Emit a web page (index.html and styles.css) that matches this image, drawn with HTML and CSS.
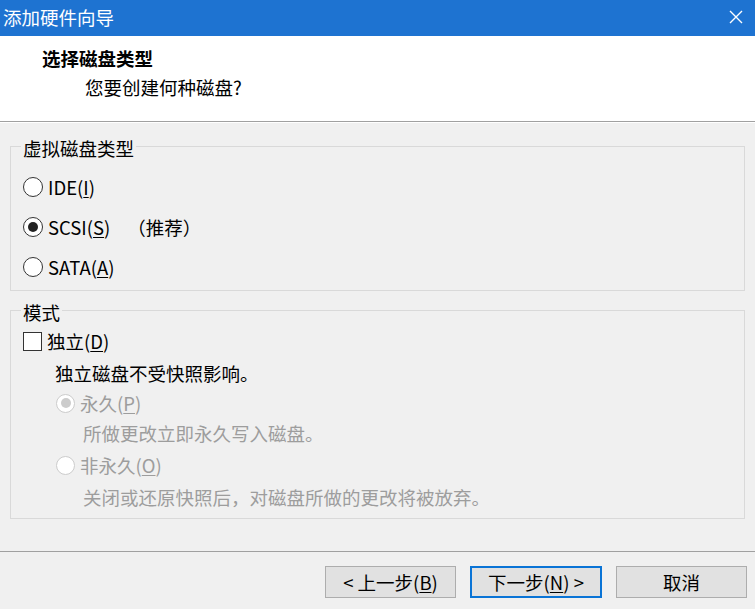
FILE: index.html
```html
<!DOCTYPE html>
<html lang="zh-CN">
<head>
<meta charset="utf-8">
<title>添加硬件向导</title>
<link rel="stylesheet" href="styles.css">
</head>
<body>
<div class="window">
  <div class="titlebar">
    <span class="title">添加硬件向导</span>
    <svg class="close" width="14" height="14" viewBox="0 0 14 14"><path d="M1 1L13 13M13 1L1 13" stroke="#fff" stroke-width="1.4" fill="none"/></svg>
  </div>
  <div class="header">
    <div class="h-title">选择磁盘类型</div>
    <div class="h-sub">您要创建何种磁盘?</div>
  </div>
  <div class="content">
    <div class="group g1">
      <div class="group-title">虚拟磁盘类型</div>
      <div class="radio-list">
        <div class="row"><span class="radio"></span><span class="lbl">IDE(<u>I</u>)</span></div>
        <div class="row"><span class="radio checked"></span><span class="lbl">SCSI(<u>S</u>)</span><span class="note">（推荐）</span></div>
        <div class="row"><span class="radio"></span><span class="lbl">SATA(<u>A</u>)</span></div>
      </div>
    </div>
    <div class="group g2">
      <div class="group-title">模式</div>
      <div class="line chk-row"><span class="checkbox"></span><span class="lbl">独立(<u>D</u>)</span></div>
      <div class="line desc">独立磁盘不受快照影响。</div>
      <div class="line sub-row"><span class="radio disabled checked"></span><span class="lbl dim">永久(<u>P</u>)</span></div>
      <div class="line sub-desc dim">所做更改立即永久写入磁盘。</div>
      <div class="line sub-row r2"><span class="radio disabled"></span><span class="lbl dim">非永久(<u>O</u>)</span></div>
      <div class="line sub-desc d3 dim">关闭或还原快照后，对磁盘所做的更改将被放弃。</div>
    </div>
  </div>
  <div class="footer">
    <button class="btn">&lt; 上一步(<u>B</u>)</button>
    <button class="btn primary">下一步(<u>N</u>) &gt;</button>
    <button class="btn">取消</button>
  </div>
</div>
</body>
</html>
```
FILE: styles.css
```css
* { box-sizing: border-box; }
html, body { margin: 0; padding: 0; }
body {
  font-family: "Noto Sans CJK SC", "Noto Sans", sans-serif;
  font-size: 18.5px;
  line-height: 22px;
  color: #000;
  background: #f0f0f0;
}
.window {
  width: 755px;
  height: 609px;
  display: flex;
  flex-direction: column;
  background: #f0f0f0;
  overflow: hidden;
}
.titlebar {
  height: 36px;
  flex: none;
  background: #1e73d1;
  color: #fff;
  display: flex;
  align-items: center;
  justify-content: space-between;
  padding: 0 12px 0 3px;
}
.title { line-height: 32px; padding-bottom: 3px; }
.close { display: block; margin-bottom: 2px; }
.header {
  height: 86px;
  flex: none;
  background: #fff;
  border-bottom: 1px solid #a0a0a0;
  padding-top: 11px;
}
.h-title { font-weight: bold; padding-left: 42px; }
.h-sub { padding-left: 85px; margin-top: 7px; }
.content {
  flex: 1;
  border-top: 1px solid #fff;
  padding: 23px 10px 0 10px;
}
.group {
  border: 1px solid #d9d9d9;
  padding-left: 12px;
}
.g2 { margin-top: 19px; padding-bottom: 6px; }
.g1 { padding-bottom: 3px; }
.group-title {
  width: max-content;
  margin: -10px 0 0 -2px;
  padding: 0 2px;
  background: #f0f0f0;
}
.radio-list { margin-top: 8px; }
.row {
  height: 40px;
  display: flex;
  align-items: center;
}
.radio {
  width: 20px;
  height: 20px;
  flex: none;
  border: 1.5px solid #333;
  border-radius: 50%;
  background: #fff;
  display: flex;
  align-items: center;
  justify-content: center;
}
.radio.checked::after {
  content: "";
  width: 10px;
  height: 10px;
  border-radius: 50%;
  background: #222;
}
.radio.disabled { border-color: #cccccc; width: 19px; height: 19px; }
.radio.disabled.checked::after { background: #cccccc; }
.lbl { margin-left: 5px; }
.note { margin-left: 17px; }
u { text-underline-offset: 2px; text-decoration-thickness: 1px; }
.line {
  height: 30px;
  display: flex;
  align-items: center;
}
.chk-row { margin-top: 3px; }
.checkbox {
  width: 19px;
  height: 19px;
  flex: none;
  border: 1.5px solid #333;
  background: #fff;
}
.desc { margin-top: 2px; padding-left: 32px; }
.sub-row { padding-left: 33px; }
.sub-row .lbl { margin-left: 5px; }
.r2 { margin-top: 2px; }
.sub-desc { padding-left: 60px; }
.d3 { margin-top: 2px; }
.dim { color: #9d9d9d; }
.footer {
  flex: none;
  height: 58px;
  border-top: 1px solid #a0a0a0;
  display: flex;
  justify-content: flex-end;
  gap: 14px;
  padding: 14px 8px 0 0;
  background: #f0f0f0;
}
.btn {
  width: 131px;
  height: 32px;
  background: #e1e1e1;
  border: 1px solid #adadad;
  font-family: inherit;
  font-size: 18.5px;
  line-height: 22px;
  color: #000;
  padding: 0;
  margin: 0;
}
.btn.primary { border: 2px solid #0a74d6; width: 132px; }
```
